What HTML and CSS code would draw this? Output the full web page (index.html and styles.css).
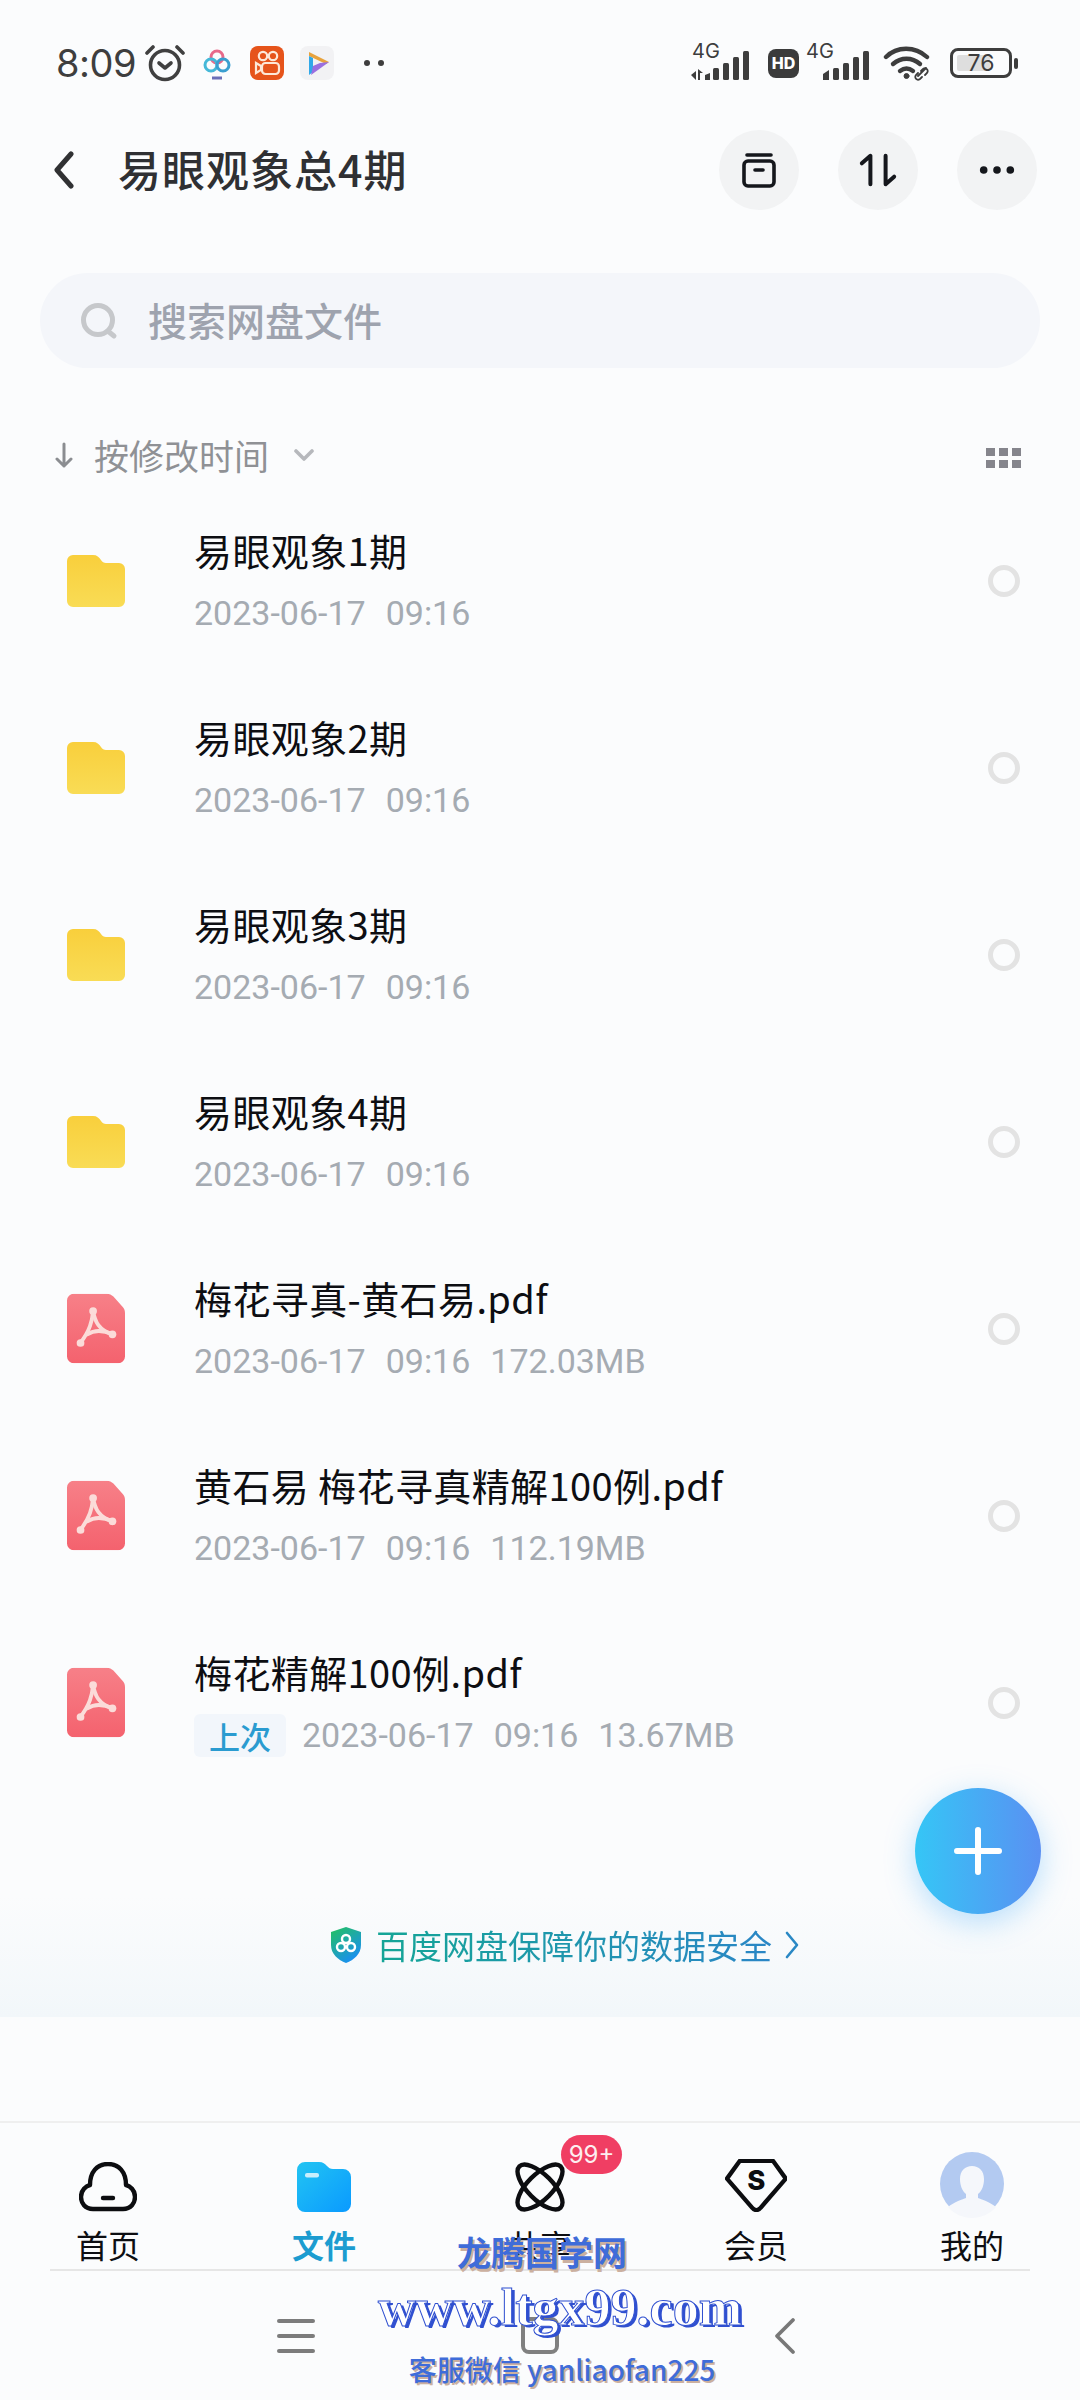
FILE: index.html
```html
<!DOCTYPE html>
<html lang="zh-CN">

<head>
  <meta charset="UTF-8">
  <title>易眼观象总4期</title>
  <link rel="stylesheet" href="styles.css">
</head>

<body>
  <div class="page">
    <div class="status-bar">
      <span class="clock">8:09</span>
      <svg class="st-alarm" viewBox="0 0 40 38" fill="none" stroke="#404040" stroke-width="3.6" stroke-linecap="round" stroke-linejoin="round">
        <circle cx="20" cy="21" r="14.5"></circle>
        <path d="M14 19l6 5 6-5"></path>
        <path d="M2 9l6-6M38 9l-6-6"></path>
      </svg>
      <svg class="st-baidu" viewBox="0 0 28 32" fill="none" stroke-width="3">
        <circle cx="14" cy="9" r="6" stroke="#e86a8a"></circle>
        <circle cx="8" cy="17" r="6" stroke="#45b8d8"></circle>
        <circle cx="20" cy="17" r="6" stroke="#3a9fd0"></circle>
        <path d="M9 30h10" stroke="#6a6fb8"></path>
      </svg>
      <svg class="st-kuai" viewBox="0 0 34 34">
        <rect width="34" height="34" rx="8" fill="#e6541b"></rect>
        <g fill="none" stroke="#fde8d8" stroke-width="2.2">
          <circle cx="13" cy="10" r="4.2"></circle>
          <circle cx="23" cy="10" r="4.2"></circle>
          <rect x="12" y="17" width="17" height="11" rx="3.5"></rect>
          <path d="M11 20l-5-3v10l5-3z"></path>
        </g>
      </svg>
      <svg class="st-play" viewBox="0 0 34 34">
        <rect width="34" height="34" rx="8" fill="#f2f2f4"></rect>
        <path d="M9 6l20 10-3 2L9 10z" fill="#e8a23c"></path>
        <path d="M9 10l4 2v14l-4 3z" fill="#30a8e8"></path>
        <path d="M29 16L11 29l2-9 7-3z" fill="#9a6fe0"></path>
      </svg>
      <span class="st-dots"><i></i><i></i></span>

      <div class="status-right">
        <div class="sim">
          <span class="sim-label">4G</span>
          <svg class="sim-bars-a" viewBox="0 0 66 30" fill="#3d3d3d">
            <path d="M1 25l5-4v9zM8 19l5 4H10v7H8zM15 25l5-2v7h-5z"></path>
            <rect x="23" y="18" width="6" height="12" rx="1.5"></rect>
            <rect x="33" y="13" width="6" height="17" rx="1.5"></rect>
            <rect x="43" y="7" width="6" height="23" rx="1.5"></rect>
            <rect x="53" y="1" width="6" height="29" rx="1.5"></rect>
          </svg>
        </div>
        <span class="hd">HD</span>
        <div class="sim sim-b">
          <span class="sim-label">4G</span>
          <svg class="sim-bars-b" viewBox="0 0 48 30" fill="#3d3d3d">
            <path d="M1 30v-6l6-4v10z"></path>
            <rect x="11" y="18" width="6" height="12" rx="1.5"></rect>
            <rect x="21" y="13" width="6" height="17" rx="1.5"></rect>
            <rect x="31" y="7" width="6" height="23" rx="1.5"></rect>
            <rect x="41" y="1" width="6" height="29" rx="1.5"></rect>
          </svg>
        </div>
        <svg class="wifi" viewBox="0 0 50 36" fill="none" stroke="#3d3d3d" stroke-linecap="round">
          <path d="M3 12C14 1 32 1 44 12" stroke-width="4.4"></path>
          <path d="M10 19c8-7 19-7 27 0" stroke-width="4.4"></path>
          <path d="M17 26c4-3 9-3 13 0" stroke-width="4.4"></path>
          <circle cx="23.500" cy="31" r="2.500" fill="#3d3d3d" stroke-width="1"></circle>
          <path d="M35 31l8-8M38 26l2-2c3-2 6 1 4 4l-2 2M39 32l-2 2c-3 2-6-1-4-4l2-2" stroke-width="1.800"></path>
        </svg>
        <div class="battery">
          <span class="battery-fill"></span>
          <span class="battery-num">76</span>
        </div>
        <span class="battery-nub"></span>
      </div>
    </div>

    <header class="top-bar">
      <svg class="back" viewBox="0 0 22 38" fill="none" stroke="#303133" stroke-width="5" stroke-linecap="round" stroke-linejoin="round">
        <path d="M18 3L4 19l14 16"></path>
      </svg>
      <h1 class="title">易眼观象总4期</h1>
      <div class="top-actions">
        <button class="round-btn">
          <svg viewBox="0 0 36 36" fill="none" stroke="#15171c" stroke-width="3.600" stroke-linecap="round">
            <path d="M6 3h24"></path>
            <rect x="3" y="9" width="30" height="25" rx="4"></rect>
            <path d="M14 18h8"></path>
          </svg>
        </button>
        <button class="round-btn">
          <svg viewBox="0 0 40 36" fill="none" stroke="#15171c" stroke-width="4.200" stroke-linecap="round" stroke-linejoin="round">
            <path d="M3 11l9-8v30"></path>
            <path d="M28 3v30l9-8"></path>
          </svg>
        </button>
        <button class="round-btn">
          <svg viewBox="0 0 40 10" fill="#15171c">
            <circle cx="6" cy="5" r="4"></circle>
            <circle cx="20" cy="5" r="4"></circle>
            <circle cx="34" cy="5" r="4"></circle>
          </svg>
        </button>
      </div>
    </header>

    <div class="search">
      <svg class="search-icon" viewBox="0 0 38 38" fill="none" stroke="#c6c8cb" stroke-width="5" stroke-linecap="round">
        <circle cx="18" cy="18" r="14.500"></circle>
        <path d="M29 30l5 4"></path>
      </svg>
      <span class="search-text">搜索网盘文件</span>
    </div>

    <div class="sort-row">
      <svg class="sort-arrow" viewBox="0 0 18 26" fill="none" stroke="#8b8d91" stroke-width="3" stroke-linecap="round" stroke-linejoin="round">
        <path d="M9 2v22M2 17l7 7 7-7"></path>
      </svg>
      <span class="sort-text">按修改时间</span>
      <svg class="sort-chevron" viewBox="0 0 20 12" fill="none" stroke="#b6b8bc" stroke-width="3.600" stroke-linecap="round" stroke-linejoin="round">
        <path d="M2 2l8 8 8-8"></path>
      </svg>
      <div class="grid-toggle">
        <i></i><i></i><i></i><i></i><i></i><i></i>
      </div>
    </div>

    <ul class="file-list">
      <li class="file-row">
        <svg class="file-icon" viewBox="0 0 58 52"><use href="#folder"></use></svg>
        <div class="file-body">
          <div class="file-name">易眼观象1期</div>
          <div class="file-meta"><span>2023-06-17</span><span>09:16</span></div>
        </div>
        <span class="radio"></span>
      </li>
      <li class="file-row">
        <svg class="file-icon" viewBox="0 0 58 52"><use href="#folder"></use></svg>
        <div class="file-body">
          <div class="file-name">易眼观象2期</div>
          <div class="file-meta"><span>2023-06-17</span><span>09:16</span></div>
        </div>
        <span class="radio"></span>
      </li>
      <li class="file-row">
        <svg class="file-icon" viewBox="0 0 58 52"><use href="#folder"></use></svg>
        <div class="file-body">
          <div class="file-name">易眼观象3期</div>
          <div class="file-meta"><span>2023-06-17</span><span>09:16</span></div>
        </div>
        <span class="radio"></span>
      </li>
      <li class="file-row">
        <svg class="file-icon" viewBox="0 0 58 52"><use href="#folder"></use></svg>
        <div class="file-body">
          <div class="file-name">易眼观象4期</div>
          <div class="file-meta"><span>2023-06-17</span><span>09:16</span></div>
        </div>
        <span class="radio"></span>
      </li>
      <li class="file-row">
        <svg class="file-icon pdf" viewBox="0 0 60 72"><use href="#pdf"></use></svg>
        <div class="file-body">
          <div class="file-name">梅花寻真-黄石易.pdf</div>
          <div class="file-meta"><span>2023-06-17</span><span>09:16</span><span>172.03MB</span></div>
        </div>
        <span class="radio"></span>
      </li>
      <li class="file-row">
        <svg class="file-icon pdf" viewBox="0 0 60 72"><use href="#pdf"></use></svg>
        <div class="file-body">
          <div class="file-name">黄石易 梅花寻真精解100例.pdf</div>
          <div class="file-meta"><span>2023-06-17</span><span>09:16</span><span>112.19MB</span></div>
        </div>
        <span class="radio"></span>
      </li>
      <li class="file-row">
        <svg class="file-icon pdf" viewBox="0 0 60 72"><use href="#pdf"></use></svg>
        <div class="file-body">
          <div class="file-name">梅花精解100例.pdf</div>
          <div class="file-meta"><span class="recent-tag">上次</span><span>2023-06-17</span><span>09:16</span><span>13.67MB</span></div>
        </div>
        <span class="radio"></span>
      </li>
    </ul>

    <div class="safe-band">
      <svg class="safe-shield" viewBox="0 0 34 38">
        <defs>
          <linearGradient id="shield" x1="0" y1="0" x2="0.600" y2="1">
            <stop offset="0" stop-color="#24c25c"></stop>
            <stop offset="1" stop-color="#1a90f0"></stop>
          </linearGradient>
        </defs>
        <path d="M17 1l15 5v13c0 9-7 15-15 18C9 34 2 28 2 19V6z" fill="url(#shield)"></path>
        <g fill="none" stroke="#fff" stroke-width="2.400">
          <circle cx="17" cy="13" r="4"></circle>
          <circle cx="12" cy="21" r="4"></circle>
          <circle cx="22" cy="21" r="4"></circle>
        </g>
      </svg>
      <span class="safe-text">百度网盘保障你的数据安全</span>
      <svg class="safe-chevron" viewBox="0 0 14 28" fill="none" stroke="#2a88c4" stroke-width="2.600" stroke-linecap="round" stroke-linejoin="round">
        <path d="M2 2l10 12L2 26"></path>
      </svg>
    </div>

    <div class="spacer"></div>

    <nav class="tab-bar">
      <div class="tab">
        <svg class="tab-icon" viewBox="0 0 58 50" fill="none" stroke="#0c0d10" stroke-width="4.400" stroke-linecap="round" stroke-linejoin="round">
          <path d="M14 47C6 47 2 41 2 35c0-7 5-11 9-12C11 10 18 2 29 2s18 8 18 21c4 1 9 5 9 12 0 6-4 12-12 12z"></path>
          <path d="M24 36h10"></path>
        </svg>
        <span class="tab-label">首页</span>
      </div>
      <div class="tab tab-active">
        <svg class="tab-icon" viewBox="0 0 54 50">
          <defs>
            <linearGradient id="tabfolder" x1="0" y1="0" x2="1" y2="1">
              <stop offset="0" stop-color="#22c4f2"></stop>
              <stop offset="1" stop-color="#0a9aff"></stop>
            </linearGradient>
          </defs>
          <path d="M0 8a8 8 0 0 1 8-8h14c4 0 6 2 8 4 2 2 3 3 6 3h10a8 8 0 0 1 8 8v27a8 8 0 0 1-8 8H8a8 8 0 0 1-8-8z" fill="url(#tabfolder)"></path>
          <rect x="8" y="11" width="14" height="4.500" rx="2" fill="#c8eefc"></rect>
        </svg>
        <span class="tab-label">文件</span>
      </div>
      <div class="tab">
        <div class="tab-icon-wrap">
          <svg class="tab-icon" viewBox="0 0 48 48" fill="none" stroke="#0c0d10" stroke-width="4.200">
            <ellipse cx="24" cy="24" rx="12" ry="28" transform="rotate(45 24 24)"></ellipse>
            <ellipse cx="24" cy="24" rx="12" ry="28" transform="rotate(-45 24 24)"></ellipse>
          </svg>
          <span class="badge">99+</span>
        </div>
        <span class="tab-label">共享</span>
      </div>
      <div class="tab">
        <svg class="tab-icon vip-icon" viewBox="0 0 64 54" fill="none" stroke="#0c0d10" stroke-width="4.400" stroke-linejoin="round">
          <path d="M15 2h34l13 18-26 30a5 5 0 0 1-8 0L2 20z"></path>
          <text class="vip-s" x="32" y="32" text-anchor="middle">S</text>
        </svg>
        <span class="tab-label vip-label">会员</span>
      </div>
      <div class="tab">
        <svg class="tab-icon avatar-icon" viewBox="0 0 64 66">
          <circle cx="32" cy="32" r="32" fill="#b3caf1"></circle>
          <path d="M8 55c6-5 15-8 18-9v-4c-4-3-6-9-6-15 0-8 5-13 12-13s12 5 12 13c0 6-2 12-6 15v4c3 1 12 4 18 9-6 7-15 11-24 11S14 62 8 55z" fill="#f5f7fb"></path>
        </svg>
        <span class="tab-label avatar-label">我的</span>
      </div>
    </nav>

    <div class="gesture-bar">
      <div class="gesture-menu"><i></i><i></i><i></i></div>
      <span class="gesture-home"></span>
      <svg class="gesture-back" viewBox="0 0 22 38" fill="none" stroke="#787878" stroke-width="3.800" stroke-linecap="round" stroke-linejoin="round">
        <path d="M19 3L3 19l16 16"></path>
      </svg>
    </div>

    <button class="fab">
      <svg viewBox="0 0 48 48" fill="none" stroke="#fff" stroke-width="6" stroke-linecap="round">
        <path d="M24 3v42M3 24h42"></path>
      </svg>
    </button>

    <div class="watermark">
      <div class="wm-name">龙腾国学网</div>
      <div class="wm-url">www.ltgx99.com</div>
      <div class="wm-contact">客服微信 yanliaofan225</div>
    </div>

    <svg class="icon-defs" width="0" height="0">
      <defs>
        <linearGradient id="foldergrad" x1="0" y1="0" x2="0" y2="1">
          <stop offset="0" stop-color="#f9cf3c"></stop>
          <stop offset="1" stop-color="#f9dc55"></stop>
        </linearGradient>
        <linearGradient id="pdfgrad" x1="0" y1="0" x2="0" y2="1">
          <stop offset="0" stop-color="#f78088"></stop>
          <stop offset="1" stop-color="#f4626e"></stop>
        </linearGradient>
        <symbol id="folder" viewBox="0 0 58 52">
          <path d="M0 6a6 6 0 0 1 6-6h20c4 0 6 2 8 5 1 2 3 3 5 3h13a6 6 0 0 1 6 6v32a6 6 0 0 1-6 6H6a6 6 0 0 1-6-6z" fill="url(#foldergrad)"></path>
        </symbol>
        <symbol id="pdf" viewBox="0 0 60 72">
          <path d="M0 7a7 7 0 0 1 7-7h34c3 0 5 1 7 3l9 10c2 2 3 4 3 7v45a7 7 0 0 1-7 7H7a7 7 0 0 1-7-7z" fill="url(#pdfgrad)"></path>
          <g fill="none" stroke="#fbdcd9" stroke-width="4" stroke-linecap="round">
            <path d="M27 18C26 28 24 38 13 52"></path>
            <path d="M27 18C29 29 33 38 47 42"></path>
            <path d="M21 42C29 37 38 38 47 42"></path>
          </g>
          <g fill="#fbdcd9">
            <circle cx="27" cy="18" r="4"></circle>
            <circle cx="14" cy="51" r="4"></circle>
            <circle cx="47" cy="42" r="4"></circle>
          </g>
        </symbol>
      </defs>
    </svg>
  </div>
</body>

</html>
```

FILE: styles.css
```css
:root {
  --bg: #fbfcfd;
  --ink: #0d0e12;
  --muted: #a5abb2;
  --sans: "Noto Sans CJK SC", "Noto Sans", sans-serif;
  --latin: Roboto, "Noto Sans CJK SC", sans-serif;
}

* {
  box-sizing: border-box;
}

body {
  margin: 0;
  font-family: var(--sans);
  color: var(--ink);
  background: var(--bg);
}

.page {
  position: relative;
  width: 1080px;
  height: 2400px;
  overflow: hidden;
  display: flex;
  flex-direction: column;
  background: var(--bg);
}

/* status bar */
.status-bar {
  display: flex;
  align-items: center;
  height: 46px;
  margin-top: 40px;
  padding-left: 56px;
  flex: none;
}

.clock {
  font-family: Inter, sans-serif;
  font-size: 38px;
  color: #3e3e3e;
  line-height: 46px;
  letter-spacing: -0.5px;
}

.st-alarm {
  width: 40px;
  height: 38px;
  margin-left: 9px;
}

.st-baidu {
  width: 28px;
  height: 32px;
  margin-left: 18px;
  margin-top: 2px;
}

.st-kuai {
  width: 34px;
  height: 34px;
  margin-left: 19px;
}

.st-play {
  width: 34px;
  height: 34px;
  margin-left: 16px;
}

.st-dots {
  display: flex;
  gap: 8px;
  margin-left: 30px;
}

.st-dots i {
  width: 6px;
  height: 6px;
  border-radius: 50%;
  background: #3e3e3e;
}

.status-right {
  display: flex;
  align-items: center;
  margin-left: auto;
  padding-right: 62px;
}

.sim {
  position: relative;
  width: 66px;
  height: 30px;
  margin-top: 3px;
}

.sim-b {
  width: 48px;
  margin-left: 23px;
}

.sim-label {
  position: absolute;
  left: 2px;
  top: -10px;
  font-family: Inter, sans-serif;
  font-size: 20px;
  line-height: 22px;
  color: #3d3d3d;
}

.sim-b .sim-label {
  left: -16px;
}

.sim-bars-a,
.sim-bars-b {
  display: block;
  width: 100%;
  height: 30px;
}

.hd {
  width: 31px;
  height: 29px;
  margin-left: 12px;
  border-radius: 8px;
  background: #3b3b3b;
  color: #fff;
  font-family: Inter, sans-serif;
  font-size: 16px;
  font-weight: 800;
  line-height: 29px;
  text-align: center;
}

.wifi {
  width: 50px;
  height: 36px;
  margin-left: 13px;
}

.battery {
  position: relative;
  width: 62px;
  height: 30px;
  margin-left: 17px;
  border: 3px solid #3d3d3d;
  border-radius: 8px;
}

.battery-fill {
  position: absolute;
  left: 4px;
  top: 4px;
  bottom: 4px;
  width: 33px;
  background: #dedede;
  border-radius: 2px;
}

.battery-num {
  position: absolute;
  inset: 0;
  font-family: Inter, sans-serif;
  font-size: 23px;
  line-height: 24px;
  text-align: center;
  color: #3d3d3d;
}

.battery-nub {
  width: 4px;
  height: 11px;
  margin-left: 2px;
  border-radius: 2px;
  background: #3d3d3d;
}

/* top bar */
.top-bar {
  display: flex;
  align-items: center;
  height: 80px;
  margin-top: 44px;
  padding: 0 43px 0 53px;
  flex: none;
}

.back {
  width: 22px;
  height: 38px;
}

.title {
  margin: -5px 0 0 43px;
  font-size: 43px;
  font-weight: 500;
  letter-spacing: 1px;
  color: #2f3033;
}

.top-actions {
  display: flex;
  gap: 39px;
  margin-left: auto;
}

.round-btn {
  display: flex;
  align-items: center;
  justify-content: center;
  width: 80px;
  height: 80px;
  padding: 0;
  border: none;
  border-radius: 50%;
  background: #f2f3f4;
}

.round-btn svg {
  width: 38px;
  height: 36px;
}

/* search */
.search {
  display: flex;
  align-items: center;
  height: 95px;
  margin: 63px 40px 0;
  padding-left: 40px;
  border-radius: 48px;
  background: #f4f6fa;
  flex: none;
}

.search-icon {
  width: 38px;
  height: 38px;
}

.search-text {
  margin: -3px 0 0 30px;
  font-size: 39px;
  font-weight: 500;
  color: #9ea3ae;
}

/* sort row */
.sort-row {
  display: flex;
  align-items: center;
  height: 50px;
  margin-top: 62px;
  padding: 0 59px 0 55px;
  flex: none;
}

.sort-arrow {
  width: 18px;
  height: 26px;
}

.sort-text {
  margin: -2px 0 0 21px;
  font-size: 35px;
  color: #8f9195;
}

.sort-chevron {
  width: 20px;
  height: 12px;
  margin-left: 25px;
}

.grid-toggle {
  display: grid;
  grid-template-columns: repeat(3, 9px);
  gap: 4px;
  margin: 5px 0 0 auto;
}

.grid-toggle i {
  height: 8px;
  background: #85858c;
}

/* file list */
.file-list {
  list-style: none;
  margin: 7px 0 0;
  padding: 0;
  flex: none;
}

.file-row {
  display: flex;
  align-items: center;
  height: 187px;
  padding: 0 60px 0 67px;
}

.file-icon {
  width: 58px;
  height: 52px;
  flex: none;
}

.file-icon.pdf {
  height: 71px;
}

.file-body {
  margin-left: 69px;
  padding-top: 2px;
  flex: 1;
}

.file-name {
  font-size: 38px;
  line-height: 50px;
  letter-spacing: 0.4px;
  color: var(--ink);
}

.file-meta {
  display: flex;
  align-items: center;
  gap: 20px;
  height: 50px;
  margin-top: 13px;
  font-family: var(--latin);
  font-size: 34px;
  color: var(--muted);
}

.recent-tag {
  width: 92px;
  height: 43px;
  margin-right: -4px;
  border-radius: 6px;
  background: #f2f6fb;
  color: #2a9bd0;
  font-family: var(--sans);
  font-size: 31px;
  font-weight: 500;
  line-height: 43px;
  text-align: center;
}

.radio {
  width: 32px;
  height: 32px;
  border: 5px solid #e3e3e3;
  border-radius: 50%;
  flex: none;
}

/* safety note */
.safe-band {
  display: flex;
  align-items: flex-start;
  height: 221px;
  padding: 130px 0 0 329px;
  background: linear-gradient(180deg, var(--bg) 45%, #f2f7fa 100%);
  flex: none;
}

.safe-shield {
  width: 34px;
  height: 38px;
}

.safe-text {
  margin-left: 13px;
  font-size: 33px;
  line-height: 38px;
  background: linear-gradient(90deg, #14a596, #2a86c6);
  -webkit-background-clip: text;
  background-clip: text;
  color: transparent;
}

.safe-chevron {
  width: 14px;
  height: 28px;
  margin: 5px 0 0 13px;
}

.spacer {
  flex: 1;
}

/* tabs */
.tab-bar {
  display: grid;
  grid-template-columns: repeat(5, 216px);
  height: 148px;
  border-top: 2px solid #efefef;
  flex: none;
}

.tab {
  display: flex;
  flex-direction: column;
  align-items: center;
}

.tab-icon {
  display: block;
  height: 50px;
  margin-top: 39px;
}

.vip-icon {
  height: 53px;
  margin-top: 36px;
}

.avatar-icon {
  height: 66px;
  margin-top: 29px;
}

.tab-icon-wrap {
  position: relative;
}

.badge {
  position: absolute;
  left: 46px;
  top: 12px;
  width: 61px;
  height: 39px;
  border-radius: 20px;
  background: #f03e63;
  color: #fdeef0;
  font-family: Inter, sans-serif;
  font-size: 24px;
  line-height: 39px;
  text-align: center;
}

.vip-s {
  font-family: Inter, sans-serif;
  font-size: 28px;
  font-weight: 800;
  fill: #0c0d10;
  stroke: none;
}

.tab-label {
  margin-top: 9px;
  font-size: 32px;
  line-height: 46px;
  color: var(--ink);
}

.vip-label {
  margin-top: 9px;
}

.avatar-label {
  margin-top: 3px;
}

.tab-active .tab-label {
  font-weight: 700;
  color: #1c9cd0;
}

/* gesture bar */
.gesture-bar {
  display: flex;
  align-items: center;
  height: 131px;
  margin: 0 50px;
  border-top: 2px solid #e6e6e6;
  padding-left: 227px;
  flex: none;
}

.gesture-menu {
  display: flex;
  flex-direction: column;
  gap: 11px;
  width: 38px;
}

.gesture-menu i {
  height: 4px;
  border-radius: 2px;
  background: #7c7c7c;
}

.gesture-home {
  width: 38px;
  height: 37px;
  margin-left: 206px;
  border: 4px solid #808080;
  border-radius: 8px;
}

.gesture-back {
  width: 22px;
  height: 38px;
  margin-left: 215px;
}

/* floating button and the overlay stamped on the screenshot */
.fab {
  position: absolute;
  left: 915px;
  top: 1788px;
  display: flex;
  align-items: center;
  justify-content: center;
  width: 126px;
  height: 126px;
  padding: 0;
  border: none;
  border-radius: 50%;
  background: linear-gradient(90deg, #35c6f6, #5a90f2);
  box-shadow: 0 8px 30px rgba(60, 170, 250, 0.35);
}

.fab svg {
  width: 48px;
  height: 48px;
}

.watermark {
  position: absolute;
  left: 0;
  right: 0;
  top: 2229px;
  display: flex;
  flex-direction: column;
  align-items: center;
  color: #3f6cd9;
}

.wm-name {
  margin-left: 4px;
  font-size: 34px;
  font-weight: 700;
  line-height: 46px;
  text-shadow: 2px 3px 0 #cbb0a0;
}

.wm-url {
  margin: 3px 0 0 40px;
  font-family: "Liberation Serif", serif;
  font-size: 52px;
  font-weight: 700;
  line-height: 60px;
  color: #fff;
  -webkit-text-stroke: 1px #3050d0;
  text-shadow: 3px 2px 0 #3050d0;
}

.wm-contact {
  margin: 9px 0 0 44px;
  font-size: 28px;
  font-weight: 500;
  line-height: 44px;
  text-shadow: 2px 2px 0 #cbb0a0;
}

.icon-defs {
  position: absolute;
}
```
